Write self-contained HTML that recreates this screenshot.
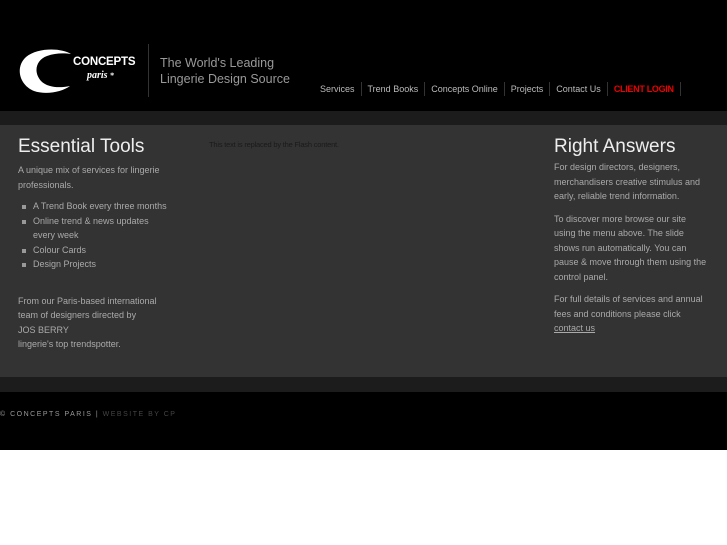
<!DOCTYPE html>
<html><head><meta charset="utf-8"><style>
*{margin:0;padding:0}
body{width:727px;height:545px;background:#fff;font-family:"Liberation Sans",sans-serif;position:relative;overflow:hidden}
.hdr{position:absolute;left:0;top:0;width:727px;height:111px;background:#000}
.b1{position:absolute;left:0;top:111px;width:727px;height:14px;background:#1c1c1c}
.main{position:absolute;left:0;top:125px;width:727px;height:252px;background:#333}
.b2{position:absolute;left:0;top:377px;width:727px;height:15px;background:#1c1c1c}
.ftr{position:absolute;left:0;top:392px;width:727px;height:58px;background:#000}
.abs{position:absolute}
h2{font-weight:normal;font-size:19px;color:#eee;position:absolute}
.p{font-size:9px;line-height:14.5px;color:#aaa;white-space:nowrap}
.nav{position:absolute;top:82px;left:314px;font-size:9px;color:#bbb;white-space:nowrap}
.nav span{display:inline-block;padding:0 6px;border-right:1px solid #333;line-height:14px}
ul{list-style:none}
li{position:relative;padding-left:15px}
li:before{content:"";position:absolute;left:4px;top:6px;width:4px;height:4px;background:#999}
</style></head><body>
<div class="hdr"></div><div class="b1"></div><div class="main"></div><div class="b2"></div><div class="ftr"></div>
<svg class="abs" style="left:18px;top:49px" width="55" height="45" viewBox="0 0 55 45"><path d="M53 5 C44 -1 20 -2 8 8 C-3 18 1 36 16 42 C28 46 44 43 52 37 C42 39 30 39 23 32 C15 23 18 11 29 7 C37 4 46 4 53 5Z" fill="#fff"/></svg>
<div class="abs" style="left:73px;top:56px;font-size:11.5px;font-weight:bold;color:#fff;letter-spacing:-0.2px">CONCEPTS</div>
<div class="abs" style="left:87px;top:70px;font-family:'Liberation Serif',serif;font-size:10px;font-style:italic;font-weight:bold;color:#fff">paris <span style="font-style:normal;font-size:8px">*</span></div>
<div class="abs" style="left:148px;top:44px;width:1px;height:53px;background:#333"></div>
<div class="abs" style="left:160px;top:55px;font-size:12.5px;line-height:16px;color:#999">The World's Leading<br>Lingerie Design Source</div>
<div class="nav"><span>Services</span><span>Trend Books</span><span>Concepts Online</span><span>Projects</span><span>Contact Us</span><span style="color:#e00;font-weight:bold;letter-spacing:-0.3px">CLIENT LOGIN</span></div>
<h2 style="left:18px;top:136px">Essential Tools</h2>
<div class="abs p" style="left:18px;top:163px">A unique mix of services for lingerie<br>professionals.
<ul style="margin-top:7px"><li>A Trend Book every three months</li><li>Online trend &amp; news updates<br>every week</li><li>Colour Cards</li><li>Design Projects</li></ul>
<div style="margin-top:22px">From our Paris-based international<br>team of designers directed by<br>JOS BERRY<br>lingerie's top trendspotter.</div></div>
<div class="abs" style="left:209px;top:140px;font-size:7.5px;color:#1a1a1a;letter-spacing:-0.2px">This text is replaced by the Flash content.</div>
<h2 style="left:554px;top:136px">Right Answers</h2>
<div class="abs p" style="left:554px;top:160px">For design directors, designers,<br>merchandisers creative stimulus and<br>early, reliable trend information.
<div style="margin-top:8px">To discover more browse our site<br>using the menu above. The slide<br>shows run automatically. You can<br>pause &amp; move through them using the<br>control panel.</div>
<div style="margin-top:8px">For full details of services and annual<br>fees and conditions please click<br><span style="text-decoration:underline">contact us</span></div></div>
<div class="abs" style="left:0;top:411px;font-size:7px;letter-spacing:1.5px;color:#999">© CONCEPTS PARIS | <span style="color:#444">WEBSITE BY CP</span></div>
</body></html>
